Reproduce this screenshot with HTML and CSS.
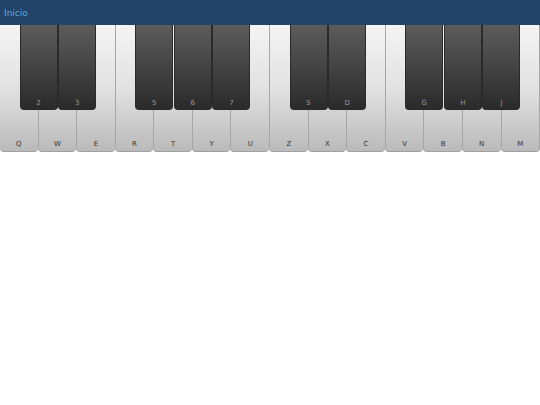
FILE: index.html
```html
<!DOCTYPE html>
<html>
<head>
<meta charset="utf-8">
<link rel="stylesheet" href="styles.css">
</head>
<body>
<header class="bar"><span class="title">Inicio</span></header>
<div class="piano">
  <div class="whites">
    <div class="wk"><span>Q</span></div>
    <div class="wk"><span>W</span></div>
    <div class="wk"><span>E</span></div>
    <div class="wk"><span>R</span></div>
    <div class="wk"><span>T</span></div>
    <div class="wk"><span>Y</span></div>
    <div class="wk"><span>U</span></div>
    <div class="wk"><span>Z</span></div>
    <div class="wk"><span>X</span></div>
    <div class="wk"><span>C</span></div>
    <div class="wk"><span>V</span></div>
    <div class="wk"><span>B</span></div>
    <div class="wk"><span>N</span></div>
    <div class="wk"><span>M</span></div>
  </div>
  <div class="bk b1"><span>2</span></div>
  <div class="bk b2"><span>3</span></div>
  <div class="bk b4"><span>5</span></div>
  <div class="bk b5"><span>6</span></div>
  <div class="bk b6"><span>7</span></div>
  <div class="bk b8"><span>S</span></div>
  <div class="bk b9"><span>D</span></div>
  <div class="bk b11"><span>G</span></div>
  <div class="bk b12"><span>H</span></div>
  <div class="bk b13"><span>J</span></div>
</div>
</body>
</html>
```
FILE: styles.css
```css
html, body { margin: 0; padding: 0; background: #fff; }
body { font-family: "DejaVu Sans", "Liberation Sans", sans-serif; }
.bar {
  height: 25px;
  background: #234468;
  display: flex;
  align-items: center;
  padding-left: 4px;
}
.title { color: #62aadb; font-size: 9px; padding-top: 1px; }
.piano { position: relative; width: 540px; height: 127px; }
.whites { display: flex; height: 100%; }
.wk {
  flex: 1;
  box-sizing: border-box;
  border-left: 1px solid #a6a6a6;
  border-bottom: 1px solid #a0a0a0;
  border-radius: 0 0 4px 4px;
  background: linear-gradient(#f4f4f4 0%, #e2e2e2 50%, #bababa 100%);
  display: flex;
  align-items: flex-end;
  justify-content: center;
  padding-bottom: 3px;
}
.wk:first-child { border-left: none; }
.wk:last-child { border-right: 1px solid #a6a6a6; }
.wk span { font-size: 7px; color: #333; }
.bk {
  position: absolute;
  top: 0;
  width: 38px;
  height: 85px;
  box-sizing: border-box;
  border: 1px solid #2a2a2a;
  border-top: none;
  border-radius: 0 0 4px 4px;
  background: linear-gradient(#5c5c5c 0%, #3e3e3e 60%, #2a2a2a 100%);
  display: flex;
  align-items: flex-end;
  justify-content: center;
  padding-bottom: 2px;
}
.bk span { font-size: 7px; color: #9a9a9a; }
.b1 { left: calc(540px / 14 * 1 - 19px); }
.b2 { left: calc(540px / 14 * 2 - 19px); }
.b4 { left: calc(540px / 14 * 4 - 19px); }
.b5 { left: calc(540px / 14 * 5 - 19px); }
.b6 { left: calc(540px / 14 * 6 - 19px); }
.b8 { left: calc(540px / 14 * 8 - 19px); }
.b9 { left: calc(540px / 14 * 9 - 19px); }
.b11 { left: calc(540px / 14 * 11 - 19px); }
.b12 { left: calc(540px / 14 * 12 - 19px); }
.b13 { left: calc(540px / 14 * 13 - 19px); }
```
